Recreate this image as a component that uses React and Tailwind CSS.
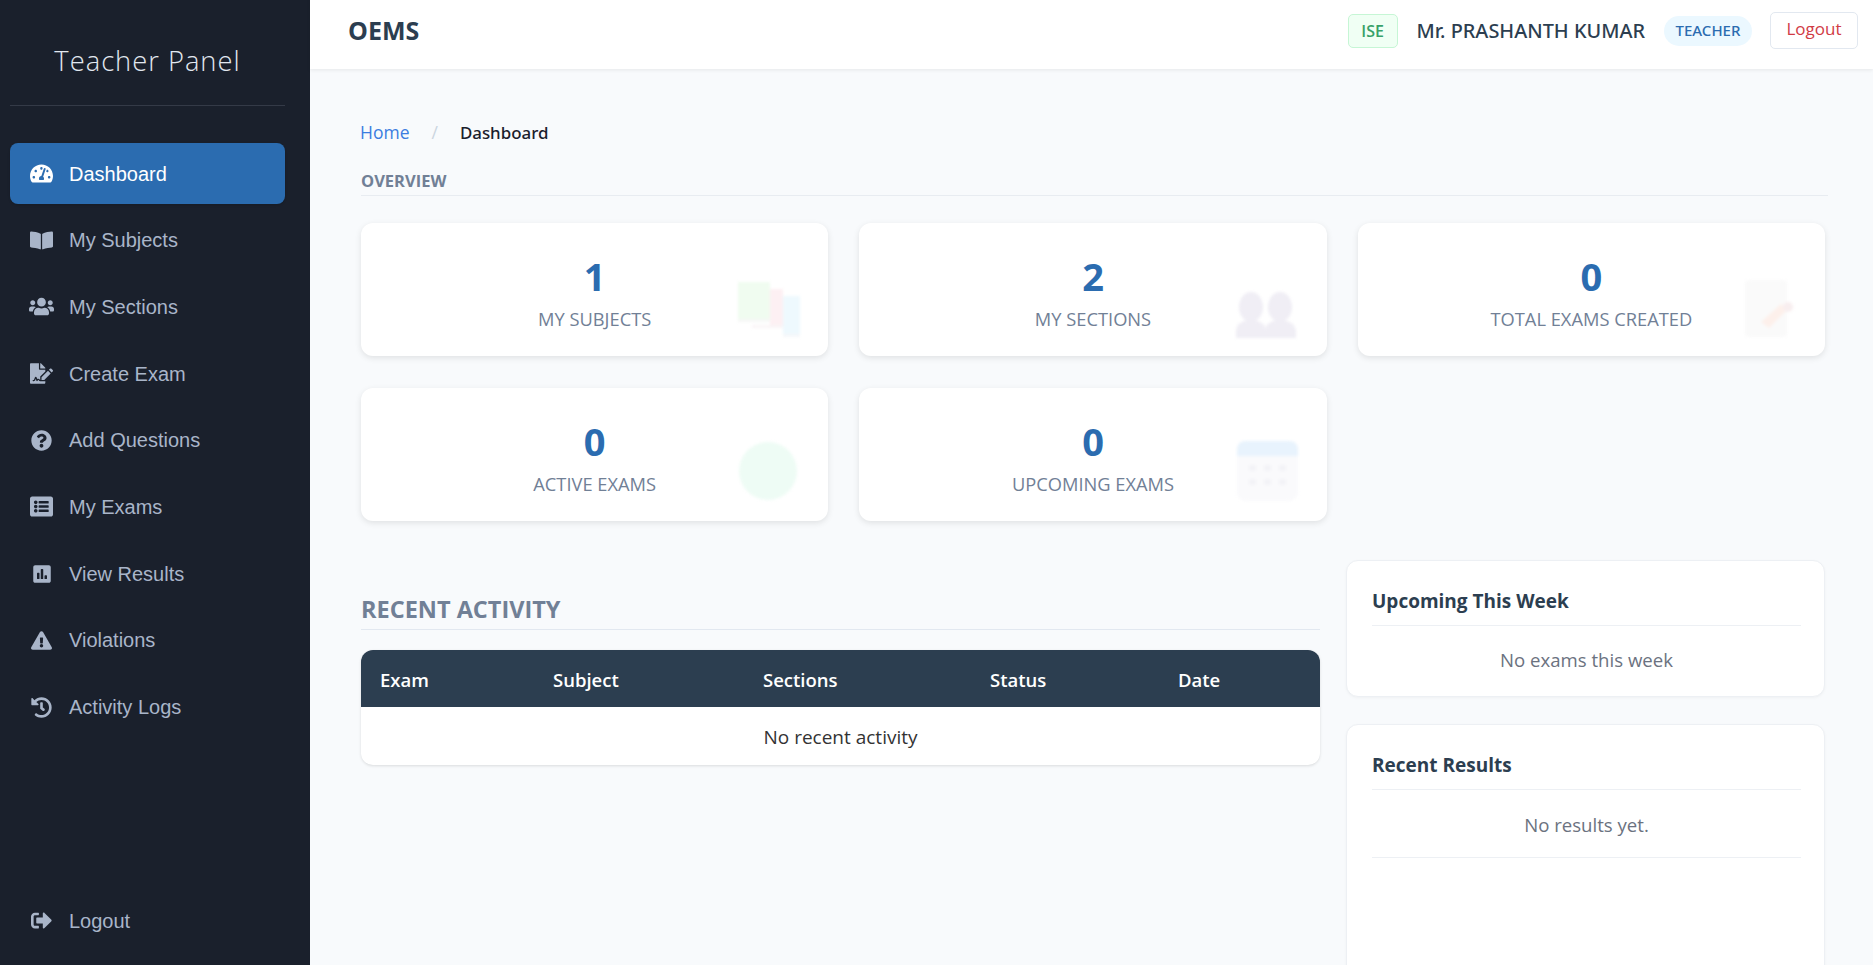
import React from "react";
import {
  FaTachometerAlt,
  FaBookOpen,
  FaUsers,
  FaFileSignature,
  FaQuestionCircle,
  FaListAlt,
  FaPoll,
  FaExclamationTriangle,
  FaHistory,
  FaSignOutAlt,
} from "react-icons/fa";

const navItems = [
  { name: "Dashboard", icon: FaTachometerAlt, size: "text-[23px]", active: true },
  { name: "My Subjects", icon: FaBookOpen, size: "text-[23px]" },
  { name: "My Sections", icon: FaUsers, size: "text-[25px]" },
  { name: "Create Exam", icon: FaFileSignature, size: "text-[23px]" },
  { name: "Add Questions", icon: FaQuestionCircle, size: "text-[21px]" },
  { name: "My Exams", icon: FaListAlt, size: "text-[23px]" },
  { name: "View Results", icon: FaPoll, size: "text-[20px]" },
  { name: "Violations", icon: FaExclamationTriangle, size: "text-[21px]" },
  { name: "Activity Logs", icon: FaHistory, size: "text-[21px]" },
];

const BooksArt = () => (
  <svg viewBox="0 0 62 55" className="w-[62px] h-[55px]">
    <rect x="45" y="14" width="17" height="38" fill="#eef9fe" />
    <rect x="45" y="52" width="17" height="3" fill="#f5f7fa" />
    <rect x="32" y="7" width="13" height="36" fill="#fdf0f3" />
    <rect x="14" y="43" width="31" height="3" fill="#f9f4f6" />
    <rect x="0" y="0" width="32" height="37" fill="#f0fcf0" />
    <rect x="0" y="37" width="32" height="3" fill="#f6f7f6" />
  </svg>
);

const PeopleArt = () => (
  <svg viewBox="0 0 60 46" className="w-[60px] h-[46px]">
    <g fill="#f0eef5">
      <ellipse cx="15" cy="15" rx="12" ry="15" />
      <path d="M0 46 V38 Q1 30 12 28 H18 Q29 30 30 38 V46 Z" />
      <ellipse cx="44" cy="15" rx="12" ry="15" />
      <path d="M29 46 V38 Q30 30 41 28 H47 Q58 30 60 38 V46 Z" />
    </g>
  </svg>
);

const DocArt = () => (
  <svg viewBox="0 0 50 58" className="w-[50px] h-[58px]">
    <rect x="0" y="0" width="42" height="57" rx="4" fill="#fafafa" />
    <path d="M16 42 L36 24 L42 30 L24 48 Z" fill="#fdf0eb" />
    <circle cx="43" cy="27" r="5" fill="#f8eeef" />
  </svg>
);

const CircleArt = () => (
  <svg viewBox="0 0 60 60" className="w-[60px] h-[60px]">
    <circle cx="30" cy="30" r="29" fill="#eefcf5" />
  </svg>
);

const CalendarArt = () => (
  <svg viewBox="0 0 61 60" className="w-[61px] h-[60px]">
    <rect x="0" y="0" width="61" height="60" rx="9" fill="#fafafc" />
    <path d="M0 15 V9 Q0 0 9 0 H52 Q61 0 61 9 V15 Z" fill="#e8f3fd" />
    <g fill="#f3f3f7">
      <rect x="12" y="24" width="7" height="6" />
      <rect x="27" y="24" width="7" height="6" />
      <rect x="42" y="24" width="7" height="6" />
      <rect x="12" y="38" width="7" height="6" />
      <rect x="27" y="38" width="7" height="6" />
      <rect x="42" y="38" width="7" height="6" />
    </g>
  </svg>
);

const stats = [
  { value: "1", label: "MY SUBJECTS", art: BooksArt, pos: "right-[28px] bottom-[19px]" },
  { value: "2", label: "MY SECTIONS", art: PeopleArt, pos: "right-[31px] bottom-[18px]" },
  { value: "0", label: "TOTAL EXAMS CREATED", art: DocArt, pos: "right-[30px] bottom-[18px]" },
  { value: "0", label: "ACTIVE EXAMS", art: CircleArt, pos: "right-[30px] bottom-[20px]" },
  { value: "0", label: "UPCOMING EXAMS", art: CalendarArt, pos: "right-[29px] bottom-[20px]" },
];

const NavLink = ({ item }) => {
  const Icon = item.icon;
  return (
    <a
      className={
        item.active
          ? "flex items-center h-[61px] pl-[19px] rounded-lg bg-[#2b6cb0] text-white shadow-sm"
          : "flex items-center h-[61px] pl-[19px] rounded-lg text-[#a9b5c9]"
      }
    >
      <span className={"w-[25px] flex justify-center " + item.size}>
        <Icon />
      </span>
      <span className="ml-[15px] text-[20px] font-['Liberation_Sans',sans-serif]">{item.name}</span>
    </a>
  );
};

const StatCard = ({ stat }) => {
  const Art = stat.art;
  return (
    <div className="relative h-[133px] bg-white rounded-xl shadow-[0_2px_6px_rgba(0,0,0,0.1)] flex flex-col items-center">
      <div className="mt-[27px] text-[38px] leading-[52px] font-bold text-[#2b6cb0]">{stat.value}</div>
      <div className="mt-[5px] text-[18.3px] leading-[24px] text-[#718096]">{stat.label}</div>
      <div className={"absolute blur-[1.5px] " + stat.pos}>
        <Art />
      </div>
    </div>
  );
};

const SidePanel = ({ title, children, className }) => (
  <div className={"bg-white rounded-xl border border-[#edf0f4] shadow-[0_1px_3px_rgba(0,0,0,0.04)] pl-[25px] pr-[23px] " + className}>
    <h3 className="pt-[27px] pb-[10px] text-[19px] leading-[27px] font-bold text-[#2c3e50] border-b border-[#edf0f4]">
      {title}
    </h3>
    {children}
  </div>
);

export default function App() {
  return (
    <div className="flex h-screen overflow-hidden bg-[#f8fafc] font-['Open_Sans',sans-serif]">
      <aside className="w-[310px] shrink-0 bg-[#1a202c] flex flex-col pl-[10px] pr-[25px]">
        <div className="h-[106px] flex items-center justify-center border-b border-[#343a47] pt-[18px]">
          <h2 className="text-[27.3px] font-light tracking-[1px] text-[#e2e8f0]">Teacher Panel</h2>
        </div>
        <nav className="mt-[37px] flex flex-col gap-[5.7px]">
          {navItems.map((item) => (
            <NavLink key={item.name} item={item} />
          ))}
        </nav>
        <div className="mt-auto mb-[14px]">
          <NavLink item={{ name: "Logout", icon: FaSignOutAlt, size: "text-[21px]" }} />
        </div>
      </aside>

      <div className="flex-1 min-w-0 flex flex-col">
        <header className="h-[69px] shrink-0 bg-white shadow-[0_1px_4px_rgba(0,0,0,0.08)] flex items-center pl-[38px] pr-[15px] pb-[8px] z-10">
          <h1 className="text-[25px] font-bold text-[#2c3e50]">OEMS</h1>
          <div className="ml-auto flex items-center">
            <span className="h-[34px] w-[50px] flex items-center justify-center rounded-[5px] bg-[#f0fff4] border border-[#c6f6d5] text-[16px] font-semibold text-[#38a169]">
              ISE
            </span>
            <span className="ml-[19px] text-[19.9px] font-medium font-['Noto_Sans',sans-serif] text-[#2c3e50]">
              Mr. PRASHANTH KUMAR
            </span>
            <span className="ml-[19px] h-[30px] w-[88px] flex items-center justify-center rounded-full bg-[#ebf8ff] text-[15px] font-medium font-['Noto_Sans',sans-serif] text-[#2b6cb0]">
              TEACHER
            </span>
            <button className="ml-[18px] h-[37px] w-[88px] pb-[3px] rounded-[5px] bg-white border border-[#e2e8f0] text-[17px] text-[#d13b45]">
              Logout
            </button>
          </div>
        </header>

        <main className="flex-1 min-h-0 overflow-hidden pl-[51px] pr-[48px]">
          <div className="mt-[50px] flex items-center text-[17.5px] leading-[27px]">
            <a className="-ml-px text-[#3b7de0]">Home</a>
            <span className="ml-[22px] text-[#cbd5e0]">/</span>
            <span className="ml-[22px] text-[16.9px] font-medium font-['Noto_Sans',sans-serif] text-[#1a202c]">Dashboard</span>
          </div>

          <h2 className="mt-[23px] -mr-[3px] pb-[2px] text-[16.5px] leading-[24px] font-bold text-[#718096] border-b border-[#e8ecf1]">
            OVERVIEW
          </h2>

          <section className="mt-[27px] grid grid-cols-3 gap-x-[31px] gap-y-[32px]">
            {stats.map((stat) => (
              <StatCard key={stat.label} stat={stat} />
            ))}
          </section>

          <section className="mt-[39px] flex gap-[26px] items-start">
            <div className="w-[959px] shrink-0 pt-[30px]">
              <h2 className="pb-[1px] text-[23.5px] leading-[38px] font-bold text-[#718096] border-b border-[#e2e8f0]">
                RECENT ACTIVITY
              </h2>
              <div className="mt-[20px] rounded-xl overflow-hidden bg-white shadow-[0_1px_3px_rgba(0,0,0,0.12)]">
                <table className="w-full table-fixed">
                  <thead>
                    <tr className="bg-[#2c3e50] text-white text-left text-[18.5px] h-[57px]">
                      <th className="w-[173px] pl-[19px] pt-[2px] font-semibold">Exam</th>
                      <th className="w-[210px] pl-[19px] pt-[2px] font-semibold">Subject</th>
                      <th className="w-[227px] pl-[19px] pt-[2px] font-semibold">Sections</th>
                      <th className="w-[188px] pl-[19px] pt-[2px] font-semibold">Status</th>
                      <th className="pl-[19px] pt-[2px] font-semibold">Date</th>
                    </tr>
                  </thead>
                  <tbody>
                    <tr className="h-[58px]">
                      <td colSpan={5} className="pt-[2px] text-center text-[19px] text-[#333]">
                        No recent activity
                      </td>
                    </tr>
                  </tbody>
                </table>
              </div>
            </div>

            <div className="flex-1 min-w-0 flex flex-col gap-[27px]">
              <SidePanel title="Upcoming This Week" className="h-[137px]">
                <p className="pt-[20px] text-center text-[18.6px] leading-[27px] text-[#6b7280]">No exams this week</p>
              </SidePanel>
              <SidePanel title="Recent Results" className="h-[400px]">
                <p className="pt-[23px] pb-[20px] text-center text-[18.6px] leading-[24px] text-[#6b7280] border-b border-[#edf0f4]">
                  No results yet.
                </p>
              </SidePanel>
            </div>
          </section>
        </main>
      </div>
    </div>
  );
}
